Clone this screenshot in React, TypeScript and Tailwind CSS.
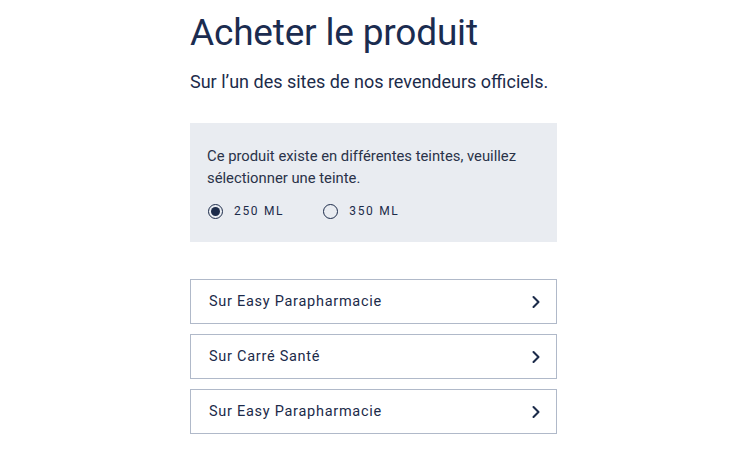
import { ChevronRight } from 'lucide-react';

const sellers = ['Sur Easy Parapharmacie', 'Sur Carré Santé', 'Sur Easy Parapharmacie'];

function Radio({ label, checked }: { label: string; checked?: boolean }) {
  return (
    <label className="flex items-center gap-[11px]">
      <span className="flex h-[15px] w-[15px] items-center justify-center rounded-full border-[1.5px] border-[#1c2b4a]">
        {checked && <span className="h-[9px] w-[9px] rounded-full bg-[#1c2b4a]" />}
      </span>
      <span className="text-[12px] tracking-[0.14em]">{label}</span>
    </label>
  );
}

export default function App() {
  return (
    <div className="flex min-h-[450px] justify-center bg-white pl-[5px] font-['Roboto',sans-serif] text-[#1c2b4a]">
      <div className="w-[367px] pt-[11px]">
        <h1 className="text-[37px] leading-[44px] tracking-[-0.005em] text-[#1b2c50]">Acheter le produit</h1>
        <p className="mt-[15px] text-[18px] leading-[24px]">Sur l’un des sites de nos revendeurs officiels.</p>
        <div className="mt-[29px] bg-[#e9ecf1] px-[17px] pt-[22px] pb-[22px]">
          <p className="text-[14.8px] leading-[22px] text-[#2a3349]">
            Ce produit existe en différentes teintes, veuillez sélectionner une teinte.
          </p>
          <div className="mt-[13px] flex gap-[39px] pl-[1px]">
            <Radio label="250 ML" checked />
            <Radio label="350 ML" />
          </div>
        </div>
        <div className="mt-[37px] flex flex-col gap-[10px]">
          {sellers.map((s, i) => (
            <button
              key={i}
              className="flex h-[45px] items-center justify-between border border-[#b0b9c9] pr-[10px] pl-[18px] text-left"
            >
              <span className="text-[14.5px] tracking-[0.05em]">{s}</span>
              <ChevronRight className="h-[20px] w-[20px]" strokeWidth={2.5} />
            </button>
          ))}
        </div>
      </div>
    </div>
  );
}
